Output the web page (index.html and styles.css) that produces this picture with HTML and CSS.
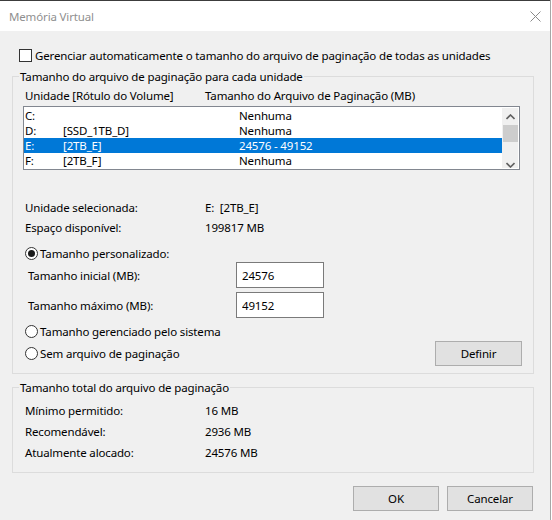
FILE: index.html
```html
<!DOCTYPE html>
<html lang="pt-BR">
<head>
  <meta charset="UTF-8" />
  <title>Memória Virtual</title>
  <link rel="stylesheet" href="styles.css">
</head>
<body>
  <div class="window">
    <div class="behind"></div>
    <div class="titlebar">
      <span class="title">Memória Virtual</span>
      <svg class="close" width="11" height="11" viewBox="0 0 11 11">
        <path d="M0.5 0.5 L10.5 10.5 M10.5 0.5 L0.5 10.5" stroke="#8a8a8a" stroke-width="1" fill="none"/>
      </svg>
    </div>

    <div class="dialog-body">
      <label class="check-row"><span class="checkbox"></span>Gerenciar automaticamente o tamanho do arquivo de paginação de todas as unidades</label>

      <fieldset class="group">
        <legend>Tamanho do arquivo de paginação para cada unidade</legend>
        <div class="drives">
          <div class="list-header">
            <span class="col-head">Unidade [Rótulo do Volume]</span>
            <span>Tamanho do Arquivo de Paginação (MB)</span>
          </div>
          <div class="listbox">
            <div class="rows">
              <div class="row"><span class="c-letter">C:</span><span class="c-label"></span><span>Nenhuma</span></div>
              <div class="row"><span class="c-letter">D:</span><span class="c-label">[SSD_1TB_D]</span><span>Nenhuma</span></div>
              <div class="row selected"><span class="c-letter">E:</span><span class="c-label">[2TB_E]</span><span>24576 - 49152</span></div>
              <div class="row"><span class="c-letter">F:</span><span class="c-label">[2TB_F]</span><span>Nenhuma</span></div>
            </div>
            <div class="scrollbar">
              <svg class="arrow" width="9" height="6" viewBox="0 0 9 6"><path d="M0.5 5 L4.5 1 L8.5 5" stroke="#606060" stroke-width="1.6" fill="none"/></svg>
              <div class="thumb"></div>
              <div class="track"></div>
              <svg class="arrow" width="9" height="6" viewBox="0 0 9 6"><path d="M0.5 1 L4.5 5 L8.5 1" stroke="#606060" stroke-width="1.6" fill="none"/></svg>
            </div>
          </div>

          <div class="info">
            <div class="info-row"><span class="info-label">Unidade selecionada:</span><span>E:&nbsp; [2TB_E]</span></div>
            <div class="info-row"><span class="info-label">Espaço disponível:</span><span>199817 MB</span></div>
          </div>

          <label class="radio-row first"><span class="radio checked"></span>Tamanho personalizado:</label>
          <div class="size-row">
            <span class="size-label">Tamanho inicial (MB):</span>
            <input class="size-input" type="text" value="24576">
          </div>
          <div class="size-row second">
            <span class="size-label">Tamanho máximo (MB):</span>
            <input class="size-input" type="text" value="49152">
          </div>
          <label class="radio-row system"><span class="radio"></span>Tamanho gerenciado pelo sistema</label>
          <div class="last-row">
            <label class="radio-row"><span class="radio"></span>Sem arquivo de paginação</label>
            <button class="btn">Definir</button>
          </div>
        </div>
      </fieldset>

      <fieldset class="group total">
        <legend>Tamanho total do arquivo de paginação</legend>
        <div class="totals">
          <div class="total-row"><span class="info-label">Mínimo permitido:</span><span>16 MB</span></div>
          <div class="total-row"><span class="info-label">Recomendável:</span><span>2936 MB</span></div>
          <div class="total-row"><span class="info-label">Atualmente alocado:</span><span>24576 MB</span></div>
        </div>
      </fieldset>

      <div class="buttons">
        <button class="btn">OK</button>
        <button class="btn">Cancelar</button>
      </div>
    </div>
  </div>
</body>
</html>
```

FILE: styles.css
```css
body {
  margin: 0;
  background: #fff;
  font-family: "Noto Sans", "Open Sans", sans-serif;
  font-size: 11.5px;
  letter-spacing: -0.15px;
  color: #000;
}
.window {
  width: 550px;
  height: 520px;
  background: #f0f0f0;
  border-right: 1px solid #a6a6a6;
  overflow: hidden;
}
.behind {
  height: 1px;
  background: #3c3c3c;
}
.titlebar {
  height: 30px;
  background: #fff;
  display: flex;
  align-items: center;
  justify-content: space-between;
  padding: 0 9px 0 9px;
}
.title {
  color: #8f8f8f;
}
.dialog-body {
  padding: 17px 0 0 12px;
}
.check-row {
  display: flex;
  align-items: center;
  height: 15px;
  margin-left: 7px;
}
.checkbox {
  width: 13px;
  height: 13px;
  box-sizing: border-box;
  border: 1px solid #333;
  background: #fff;
  margin-right: 3px;
}

/* group boxes */
.group {
  width: 522px;
  box-sizing: border-box;
  margin: 5px 0 0 0;
  padding: 0;
  border: 1px solid #dcdcdc;
  min-width: 0;
}
.group legend {
  margin-left: 6px;
  padding: 0 1px;
  line-height: 17px;
}
.drives {
  padding: 3px 11px 7px 10px;
}
.list-header {
  display: flex;
  line-height: 15px;
  padding-left: 2px;
}
.col-head {
  width: 180px;
}
.listbox {
  width: 497px;
  height: 64px;
  box-sizing: border-box;
  margin-top: 3px;
  border: 1px solid #828790;
  background: #fff;
  display: flex;
}
.rows {
  width: 478px;
  padding-top: 1px;
}
.row {
  display: flex;
  height: 15px;
  line-height: 15px;
  padding-left: 1px;
}
.row.selected {
  background: #0078d7;
  color: #fff;
}
.c-letter {
  width: 38px;
}
.c-label {
  width: 176px;
}
.scrollbar {
  width: 16px;
  margin: 1px 0 0 0;
  height: 60px;
  background: #f0f0f0;
  display: flex;
  flex-direction: column;
  align-items: center;
}
.arrow {
  margin: 6px 0 5px;
}
.scrollbar .arrow:last-child {
  margin: 3px 0 0;
}
.thumb {
  width: 15px;
  height: 17px;
  background: #cdcdcd;
}
.track {
  flex: 1;
}
.info {
  margin-top: 28px;
  padding-left: 2px;
}
.info-row {
  display: flex;
  line-height: 20px;
}
.info-label {
  width: 180px;
}

/* radio buttons and size fields */
.radio-row {
  display: flex;
  align-items: center;
  height: 15px;
  padding-left: 2px;
}
.radio-row.first {
  margin-top: 8px;
}
.radio-row.system {
  margin-top: 6px;
}
.radio {
  width: 13px;
  height: 13px;
  box-sizing: border-box;
  border: 1px solid #333;
  border-radius: 50%;
  background: #fff;
  margin-right: 2px;
  display: flex;
  align-items: center;
  justify-content: center;
}
.radio.checked::after {
  content: "";
  width: 7px;
  height: 7px;
  border-radius: 50%;
  background: #1a1a1a;
}
.size-row {
  display: flex;
  align-items: center;
  margin-top: 1px;
}
.size-row.second {
  margin-top: 4px;
}
.size-label {
  width: 208px;
  padding-left: 5px;
}
.size-input {
  width: 88px;
  height: 26px;
  box-sizing: border-box;
  border: 1px solid #7a7a7a;
  background: #fff;
  padding: 0 0 0 5px;
  font: inherit;
  letter-spacing: inherit;
  color: #000;
  outline: none;
}
.last-row {
  display: flex;
  align-items: center;
  justify-content: space-between;
  margin-top: 2px;
}
.btn {
  width: 86px;
  height: 25px;
  box-sizing: border-box;
  border: 1px solid #adadad;
  background: #e1e1e1;
  font: inherit;
  letter-spacing: inherit;
  color: #000;
  padding: 0;
}
.last-row .btn {
  width: 87px;
}

/* totals */
.totals {
  padding: 4px 0 9px 12px;
}
.total-row {
  display: flex;
  line-height: 21px;
}
.buttons {
  width: 521px;
  display: flex;
  justify-content: flex-end;
  gap: 8px;
  margin-top: 13px;
}
```
